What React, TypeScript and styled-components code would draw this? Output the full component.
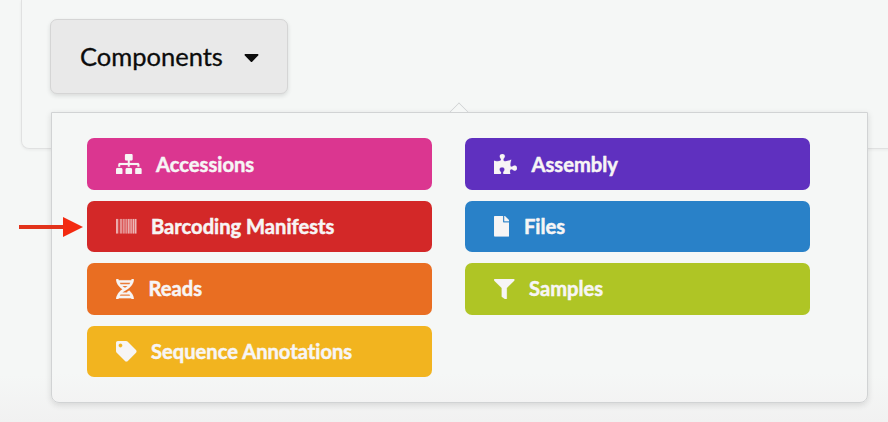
import React from "react";
import styled, { createGlobalStyle } from "styled-components";
import {
  FaCaretDown,
  FaDna,
  FaFile,
  FaFilter,
  FaPuzzlePiece,
  FaSitemap,
  FaTag,
} from "react-icons/fa";

const GlobalStyle = createGlobalStyle`
  *, *::before, *::after { box-sizing: border-box; }
  body {
    margin: 0;
    background: #f5f7f6;
    font-family: Lato, "Liberation Sans", sans-serif;
    font-variant-ligatures: none;
    overflow: hidden;
  }
`;

const Page = styled.main`
  position: relative;
  height: 422px;
  padding-left: 21px;
  overflow: hidden;
  background: linear-gradient(#f5f7f6 0, #f5f7f6 375px, #f1f1f1 422px);
`;

const Segment = styled.section`
  height: 149px;
  margin-right: -20px;
  padding: 19px 0 0 29px;
  border: 1px solid #e0e1e1;
  border-top: 0;
  border-radius: 0 0 0 8px;
  box-shadow: 0 1px 3px rgba(34, 36, 38, 0.06);
`;

const DropdownButton = styled.button`
  display: flex;
  align-items: center;
  justify-content: space-between;
  width: 238px;
  height: 75px;
  margin-left: -1px;
  padding: 0 28px 0 29px;
  border: 1px solid #d5d5d5;
  border-radius: 7px;
  background: #e9e9e9;
  box-shadow: 0 2px 4px rgba(34, 36, 38, 0.13);
  color: #0c0c0c;
  font: 400 25.5px/1 Lato, "Liberation Sans", sans-serif;
  font-variant-ligatures: none;
  -webkit-text-stroke: 0.3px currentColor;

  svg {
    width: 15px;
    height: 24px;
    stroke-width: 0;
  }
`;

const Menu = styled.nav`
  position: absolute;
  top: 112px;
  left: 51px;
  width: 817px;
  height: 291px;
  padding: 25px 57px 25px 35px;
  border: 1px solid #d1d3d4;
  border-radius: 0 0 8px 8px;
  background: linear-gradient(#f5f7f6 0, #f5f7f6 260px, #f3f3f3 291px);
  box-shadow: 0 2px 6px rgba(34, 36, 38, 0.14);

  &::before {
    content: "";
    position: absolute;
    top: -8px;
    left: 400px;
    width: 14px;
    height: 14px;
    border: 1.5px solid #d1d3d4;
    border-right: 0;
    border-bottom: 0;
    background: #f5f7f6;
    transform: rotate(45deg);
    clip-path: polygon(0 0, 100% 0, 0 100%);
  }
`;

const Grid = styled.div`
  display: grid;
  grid-template-columns: 345px 345px;
  grid-template-rows: 52px 51px 52px 51px;
  gap: 11px 33px;
`;

const Label = styled.span`
  -webkit-text-stroke: 0.5px currentColor;
`;

const Item = styled.a<{ $color: string; $iconWidth: number }>`
  display: flex;
  align-items: center;
  gap: 14.5px;
  padding: 0 29px;
  border-radius: 7px;
  background: ${({ $color }) => $color};
  color: #f7f5f5;
  font-size: 20.15px;
  font-weight: 700;
  line-height: 26px;
  white-space: nowrap;
  text-decoration: none;

  svg {
    width: ${({ $iconWidth }) => $iconWidth}px;
    height: 20.5px;
    flex: none;
    stroke: currentColor;
    stroke-width: 4px;
  }

  &:nth-child(n + 3) ${Label} {
    margin-top: -1.4px;
  }
`;

const Pointer = styled.svg`
  position: absolute;
  top: 216px;
  left: 19px;
  width: 64px;
  height: 22px;
`;

const bars = [
  [0, 2, 0.65],
  [2.5, 0.8, 0.35],
  [4, 2.5, 0.5],
  [7, 2, 0.5],
  [9.5, 2, 0.5],
  [12, 2, 0.65],
  [14.5, 2, 0.55],
  [17, 1.5, 0.7],
  [19, 2, 0.7],
];

function Barcode() {
  return (
    <svg viewBox="0 0 21 21">
      {bars.map(([x, width, opacity]) => (
        <rect
          key={x}
          x={x}
          y="3"
          width={width}
          height="15"
          fill="currentColor"
          stroke="none"
          opacity={opacity}
        />
      ))}
    </svg>
  );
}

const items = [
  { label: "Accessions", color: "#db3690", Icon: FaSitemap, iconWidth: 25.6 },
  { label: "Assembly", color: "#5f30bf", Icon: FaPuzzlePiece, iconWidth: 23 },
  { label: "Barcoding Manifests", color: "#d32828", Icon: Barcode, iconWidth: 20.5 },
  { label: "Files", color: "#2981c8", Icon: FaFile, iconWidth: 15.4 },
  { label: "Reads", color: "#e96e22", Icon: FaDna, iconWidth: 18 },
  { label: "Samples", color: "#afc525", Icon: FaFilter, iconWidth: 20.5 },
  { label: "Sequence Annotations", color: "#f2b41f", Icon: FaTag, iconWidth: 20.5 },
];

export default function App() {
  return (
    <>
      <GlobalStyle />
      <Page>
        <Segment>
          <DropdownButton type="button">
            Components
            <FaCaretDown />
          </DropdownButton>
        </Segment>
        <Menu>
          <Grid>
            {items.map(({ label, color, Icon, iconWidth }) => (
              <Item key={label} $color={color} $iconWidth={iconWidth}>
                <Icon />
                <Label>{label}</Label>
              </Item>
            ))}
          </Grid>
        </Menu>
        <Pointer viewBox="0 0 64 22" aria-hidden="true">
          <path d="M0 9h45v4H0z" fill="#e2331b" />
          <path d="M44 1l20 10-20 10z" fill="#f32a10" />
        </Pointer>
      </Page>
    </>
  );
}
